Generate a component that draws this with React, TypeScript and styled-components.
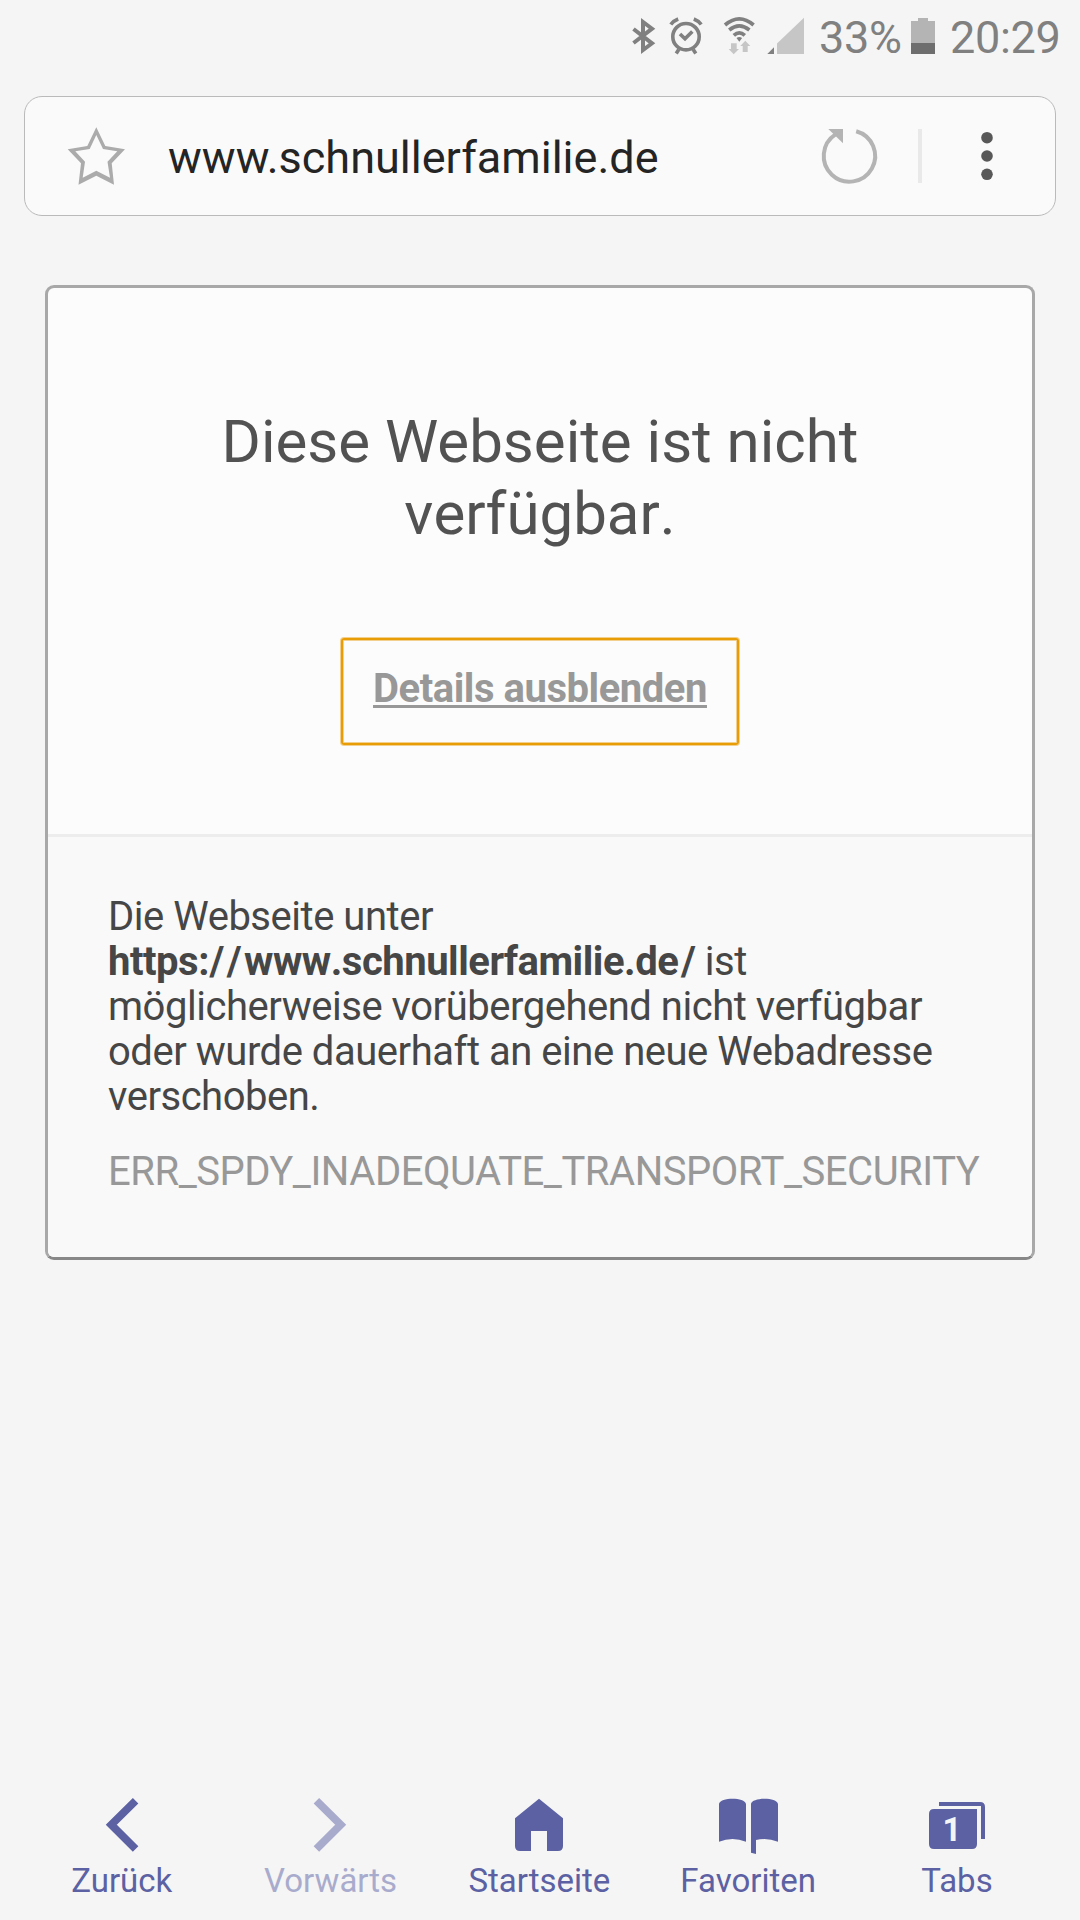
import React from 'react';
import styled, { createGlobalStyle } from 'styled-components';

const GlobalStyle = createGlobalStyle`
  *, *::before, *::after { box-sizing: border-box; }
  body { margin: 0; background: #f5f5f5; }
`;

const Screen = styled.div`
  display: flex;
  flex-direction: column;
  width: 1080px;
  height: 1920px;
  background: #f5f5f5;
  font-family: Roboto, "Noto Sans", sans-serif;
  overflow: hidden;
`;

const Glyph = styled.svg<{ $gap?: number; $top?: number }>`
  display: block;
  flex: none;
  overflow: visible;
  margin-left: ${(p) => p.$gap ?? 0}px;
  margin-top: ${(p) => p.$top ?? 0}px;
`;

const StatusBar = styled.header`
  display: flex;
  align-items: flex-start;
  height: 96px;
  padding-left: 632px;
  color: #808080;
`;

const StatusText = styled.span<{ $gap: number; $width: number }>`
  flex: none;
  width: ${(p) => p.$width}px;
  margin-left: ${(p) => p.$gap}px;
  font-size: 45px;
  line-height: 75px;
  letter-spacing: -0.3px;
  white-space: nowrap;
`;

const AddressBar = styled.div`
  display: flex;
  align-items: center;
  flex: none;
  height: 120px;
  margin: 0 24px;
  padding: 0 62px 0 41px;
  border: 1px solid #bababa;
  border-radius: 18px;
  background: #fafafa;
`;

const Url = styled.span`
  flex: 1;
  margin-left: 42px;
  padding-top: 3px;
  font-size: 45px;
  line-height: 60px;
  color: #242424;
`;

const Separator = styled.span`
  width: 4px;
  height: 54px;
  margin: 0 59px 0 38px;
  background: #e9e9e9;
`;

const Content = styled.main`
  flex: 1;
  padding: 69px 45px 0;
`;

const Card = styled.section`
  border: 3px solid #a8a8a8;
  border-bottom-color: #888888;
  border-radius: 9px;
  background: #fcfcfc;
  overflow: hidden;
`;

const Summary = styled.div`
  display: flex;
  flex-direction: column;
  align-items: center;
  height: 546px;
  padding-top: 118px;
`;

const Title = styled.h1`
  width: 760px;
  margin: 0 0 88px;
  font-size: 60px;
  font-weight: 400;
  line-height: 72px;
  text-align: center;
  color: #525252;
`;

const Unkerned = styled.span`
  font-kerning: none;
`;

const DetailsButton = styled.button`
  width: 398px;
  height: 107px;
  padding: 26px 0 32px;
  border: 2px solid #e89c06;
  border-radius: 3px;
  box-shadow: 0 0 0 1px rgba(232, 156, 6, 0.45), inset 0 0 0 1px rgba(232, 156, 6, 0.45);
  background: transparent;
  font: 700 40px/45px Roboto, "Noto Sans", sans-serif;
  letter-spacing: -0.46px;
  text-decoration: underline;
  text-decoration-thickness: 3px;
  text-underline-offset: 3px;
  text-decoration-skip-ink: none;
  white-space: nowrap;
  color: #989898;
`;

const Details = styled.div`
  padding: 57px 60px 63px;
  border-top: 3px solid #ededed;
  background: #f9f9f9;
  font-size: 40px;
  line-height: 45px;
`;

const Message = styled.p`
  margin: 0 0 30px;
  letter-spacing: -0.47px;
  color: #464646;
`;

const SiteAddress = styled.b`
  font-kerning: none;
  white-space: nowrap;
`;

const Slashes = styled.span<{ $lead?: number }>`
  margin-left: ${(p) => p.$lead ?? 0}px;
  letter-spacing: 2.4px;
`;

const TrailingSlash = styled.span`
  margin-left: 2.5px;
`;

const ErrorCode = styled.p`
  margin: 0;
  letter-spacing: -0.46px;
  white-space: nowrap;
  color: #989898;
`;

const Toolbar = styled.nav`
  display: grid;
  grid-template-columns: repeat(5, 1fr);
  flex: none;
  height: 123px;
  padding: 0 19px 0 17px;
`;

const ToolButton = styled.a<{ $disabled?: boolean }>`
  display: flex;
  flex-direction: column;
  align-items: center;
  color: ${(p) => (p.$disabled ? '#a9abcd' : '#5c61a3')};
`;

const ToolLabel = styled.span`
  margin-top: 4px;
  padding-left: 0.8px;
  font-size: 33px;
  line-height: 40px;
  white-space: nowrap;
`;

const TabCount = styled.text`
  font: 700 33px Roboto, sans-serif;
  fill: #f5f5f5;
`;

const BluetoothIcon = () => (
  <Glyph width="24" height="36" $top={18} fill="none" stroke="currentColor" strokeWidth="4">
    <path d="M1.5 11 20 25.3 11 32V4l9 6.7L1.5 25" />
  </Glyph>
);

const AlarmIcon = () => (
  <Glyph width="32" height="37" $gap={14} $top={17} fill="none" stroke="currentColor" strokeWidth="3.6">
    <circle cx="16" cy="19.7" r="13.2" />
    <path d="m10 17 5 4.8 7.3-7.3M.8 7.6Q3.4 3.8 8.2 2M23.8 2q4.8 1.8 7.4 5.6M8.8 32.4l-2.6 4M23.2 32.4l2.6 4" />
  </Glyph>
);

const WifiIcon = () => (
  <Glyph width="33" height="38" $gap={21} $top={17} fill="none" stroke="currentColor" strokeWidth="3.7">
    <path d="M2 8Q16.3-4.2 30.6 8M6.2 13Q16.3 4.8 26.4 13M10.8 18.4q5.5-5 11 0" />
    <path d="M13.5 21q2.8-2 5.6 0l-2.8 3.7z" fill="currentColor" stroke="none" />
    <path
      d="M8 26.3h5.7V32H16l-5.3 5.3L5.7 32H8zM22.3 23.7l5 5.3h-2.6v6h-5v-6h-2.4z"
      fill="#c6c6c6"
      stroke="none"
    />
  </Glyph>
);

const SignalIcon = () => (
  <Glyph width="37" height="37" $gap={11} $top={17}>
    <path d="M10 26.5 37 .7V37H10z" fill="#c6c6c6" />
    <path d="M.3 37 7 30.3V37z" fill="currentColor" />
  </Glyph>
);

const BatteryIcon = () => (
  <Glyph width="24" height="36" $gap={0} $top={18}>
    <path d="M0 3h7V0h10v3h7v22H0z" fill="#b4b4b4" />
    <path d="M0 25h24v11H0z" fill="#6e6e6e" />
  </Glyph>
);

const StarIcon = () => (
  <Glyph width="60" height="60" fill="#ababab" fillRule="evenodd">
    <path d="M30.3 1.3 39.3 20 59 23.3 45.7 37.3 48 58.7 30.3 49.7 12.5 58.7 15 37.3 1.7 23.3 21.3 20zM30.3 9 23.7 23 9.3 25.3 19 35.7 16.7 51.7 30.3 44.7 44 51.7 41.5 35.7 51.3 25.3 37 23z" />
  </Glyph>
);

const ReloadIcon = () => (
  <Glyph width="60" height="60" fill="none" stroke="#b4b4b4" strokeWidth="4">
    <path d="M36.2 5.2A25.7 25.7 0 1 1 15.5 8.4" />
    <path d="M8.3 3H23v14.3z" fill="#b4b4b4" stroke="none" />
  </Glyph>
);

const MenuIcon = () => (
  <Glyph width="12" height="60" fill="#585858">
    <circle cx="6" cy="11.7" r="5.8" />
    <circle cx="6" cy="30" r="5.8" />
    <circle cx="6" cy="48.3" r="5.8" />
  </Glyph>
);

const BackIcon = () => (
  <Glyph width="60" height="60" fill="none" stroke="currentColor" strokeWidth="7.8">
    <path d="M44.6 3.7 20.3 27.7l24.3 24.2" />
  </Glyph>
);

const ForwardIcon = () => (
  <Glyph width="60" height="60" fill="none" stroke="currentColor" strokeWidth="7.8">
    <path d="m16.4 3.7 24.3 24-24.3 24.2" />
  </Glyph>
);

const HomeIcon = () => (
  <Glyph width="60" height="60" fill="currentColor">
    <path d="m30 1.8 24 19.4V49q0 5-5 5H38V34H22v20H11q-5 0-5-5V21.2z" />
  </Glyph>
);

const BookIcon = () => (
  <Glyph width="60" height="60" fill="currentColor">
    <path d="M1 7C2 0 27 0 28 7v37.7Q14.5 39.5 1 44.7z" />
    <path d="M33 7C34 0 59 0 60 7v37.7Q49 40.5 38 43v14l-5-1.2z" />
  </Glyph>
);

const TabsIcon = () => (
  <Glyph width="60" height="60" fill="currentColor">
    <path d="M7 12h43v35q0 5-5 5H7q-5 0-5-5V17q0-5 5-5z" />
    <path d="M12 5h41q5 0 5 5v32h-4V9H12z" />
    <TabCount x="25" y="44" textAnchor="middle">1</TabCount>
  </Glyph>
);

const tools = [
  { label: 'Zurück', Icon: BackIcon },
  { label: 'Vorwärts', Icon: ForwardIcon, disabled: true },
  { label: 'Startseite', Icon: HomeIcon },
  { label: 'Favoriten', Icon: BookIcon },
  { label: 'Tabs', Icon: TabsIcon },
];

export default function App() {
  return (
    <Screen>
      <GlobalStyle />
      <StatusBar>
        <BluetoothIcon />
        <AlarmIcon />
        <WifiIcon />
        <SignalIcon />
        <StatusText $gap={15} $width={92}>33%</StatusText>
        <BatteryIcon />
        <StatusText $gap={15} $width={120}>20:29</StatusText>
      </StatusBar>
      <AddressBar>
        <StarIcon />
        <Url>www.schnullerfamilie.de</Url>
        <ReloadIcon />
        <Separator />
        <MenuIcon />
      </AddressBar>
      <Content>
        <Card>
          <Summary>
            <Title>
              Diese Webseite ist nicht <Unkerned>verfügbar.</Unkerned>
            </Title>
            <DetailsButton>Details ausblenden</DetailsButton>
          </Summary>
          <Details>
            <Message>
              Die Webseite unter{' '}
              <SiteAddress>
                https:<Slashes $lead={0.5}>//</Slashes>www.schnullerfamilie.de<TrailingSlash>/</TrailingSlash>
              </SiteAddress>{' '}
              ist möglicherweise vorübergehend nicht verfügbar oder wurde dauerhaft an eine neue
              Webadresse verschoben.
            </Message>
            <ErrorCode>ERR_SPDY_INADEQUATE_TRANSPORT_SECURITY</ErrorCode>
          </Details>
        </Card>
      </Content>
      <Toolbar>
        {tools.map(({ label, Icon, disabled }) => (
          <ToolButton key={label} $disabled={disabled}>
            <Icon />
            <ToolLabel>{label}</ToolLabel>
          </ToolButton>
        ))}
      </Toolbar>
    </Screen>
  );
}
